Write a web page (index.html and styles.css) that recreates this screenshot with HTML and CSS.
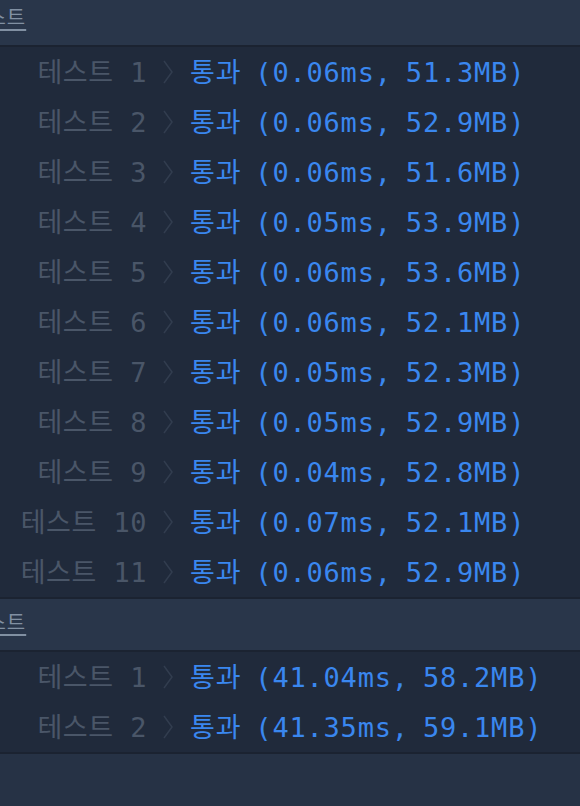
FILE: index.html
```html
<!DOCTYPE html>
<html lang="ko">
<head>
<meta charset="utf-8">
<link rel="stylesheet" href="styles.css">
</head>
<body>
<div class="panel">
  <section class="group">
    <div class="group-head"><span class="group-title">테스트</span></div>
    <div class="rows">
      <div class="row"><span class="label">테스트 1</span><span class="chev"><svg viewBox="0 0 10 24" width="10" height="24"><polyline points="1,1 9,12 1,23" /></svg></span><span class="result">통과 (0.06ms, 51.3MB)</span></div>
      <div class="row"><span class="label">테스트 2</span><span class="chev"><svg viewBox="0 0 10 24" width="10" height="24"><polyline points="1,1 9,12 1,23" /></svg></span><span class="result">통과 (0.06ms, 52.9MB)</span></div>
      <div class="row"><span class="label">테스트 3</span><span class="chev"><svg viewBox="0 0 10 24" width="10" height="24"><polyline points="1,1 9,12 1,23" /></svg></span><span class="result">통과 (0.06ms, 51.6MB)</span></div>
      <div class="row"><span class="label">테스트 4</span><span class="chev"><svg viewBox="0 0 10 24" width="10" height="24"><polyline points="1,1 9,12 1,23" /></svg></span><span class="result">통과 (0.05ms, 53.9MB)</span></div>
      <div class="row"><span class="label">테스트 5</span><span class="chev"><svg viewBox="0 0 10 24" width="10" height="24"><polyline points="1,1 9,12 1,23" /></svg></span><span class="result">통과 (0.06ms, 53.6MB)</span></div>
      <div class="row"><span class="label">테스트 6</span><span class="chev"><svg viewBox="0 0 10 24" width="10" height="24"><polyline points="1,1 9,12 1,23" /></svg></span><span class="result">통과 (0.06ms, 52.1MB)</span></div>
      <div class="row"><span class="label">테스트 7</span><span class="chev"><svg viewBox="0 0 10 24" width="10" height="24"><polyline points="1,1 9,12 1,23" /></svg></span><span class="result">통과 (0.05ms, 52.3MB)</span></div>
      <div class="row"><span class="label">테스트 8</span><span class="chev"><svg viewBox="0 0 10 24" width="10" height="24"><polyline points="1,1 9,12 1,23" /></svg></span><span class="result">통과 (0.05ms, 52.9MB)</span></div>
      <div class="row"><span class="label">테스트 9</span><span class="chev"><svg viewBox="0 0 10 24" width="10" height="24"><polyline points="1,1 9,12 1,23" /></svg></span><span class="result">통과 (0.04ms, 52.8MB)</span></div>
      <div class="row"><span class="label">테스트 10</span><span class="chev"><svg viewBox="0 0 10 24" width="10" height="24"><polyline points="1,1 9,12 1,23" /></svg></span><span class="result">통과 (0.07ms, 52.1MB)</span></div>
      <div class="row"><span class="label">테스트 11</span><span class="chev"><svg viewBox="0 0 10 24" width="10" height="24"><polyline points="1,1 9,12 1,23" /></svg></span><span class="result">통과 (0.06ms, 52.9MB)</span></div>
    </div>
  </section>
  <section class="group">
    <div class="group-head"><span class="group-title">테스트</span></div>
    <div class="rows">
      <div class="row"><span class="label">테스트 1</span><span class="chev"><svg viewBox="0 0 10 24" width="10" height="24"><polyline points="1,1 9,12 1,23" /></svg></span><span class="result">통과 (41.04ms, 58.2MB)</span></div>
      <div class="row"><span class="label">테스트 2</span><span class="chev"><svg viewBox="0 0 10 24" width="10" height="24"><polyline points="1,1 9,12 1,23" /></svg></span><span class="result">통과 (41.35ms, 59.1MB)</span></div>
    </div>
  </section>
  <div class="footer"></div>
</div>
</body>
</html>
```
FILE: styles.css
```css
html, body {
  margin: 0;
  padding: 0;
  background: #263245;
  height: 100%;
  overflow: hidden;
}
.panel {
  margin-top: -6px;
  display: flex;
  flex-direction: column;
  font-family: "DejaVu Sans Mono", "Noto Sans CJK KR", monospace;
}
.group-head {
  height: 53px;
  box-sizing: border-box;
  padding-bottom: 6px;
  background: #29364a;
  border-bottom: 2px solid #1b2331;
  display: flex;
  align-items: center;
}
.group-title {
  margin-left: -32px;
  font-family: "Noto Sans CJK KR", sans-serif;
  font-size: 20px;
  color: #8190a2;
  text-decoration: underline;
  text-underline-offset: 4px;
  letter-spacing: 1px;
}
.rows {
  background: #202a3b;
  border-bottom: 2px solid #1b2331;
}
.row {
  height: 50px;
  box-sizing: border-box;
  padding-bottom: 4px;
  display: grid;
  grid-template-columns: 147px 43px 1fr;
  align-items: center;
  font-size: 27px;
  letter-spacing: 0.5px;
}
.label {
  text-align: right;
  color: #4a5668;
  white-space: nowrap;
}
.chev {
  display: flex;
  justify-content: center;
  padding-right: 2px;
  padding-top: 3px;
}
.chev svg {
  display: block;
}
.chev polyline {
  fill: none;
  stroke: #323d4f;
  stroke-width: 1.5;
}
.result {
  color: #3a87ef;
  white-space: nowrap;
  letter-spacing: 0.8px;
  word-spacing: -3px;
}
.footer {
  flex: 1;
  height: 60px;
  background: #263245;
}
```
